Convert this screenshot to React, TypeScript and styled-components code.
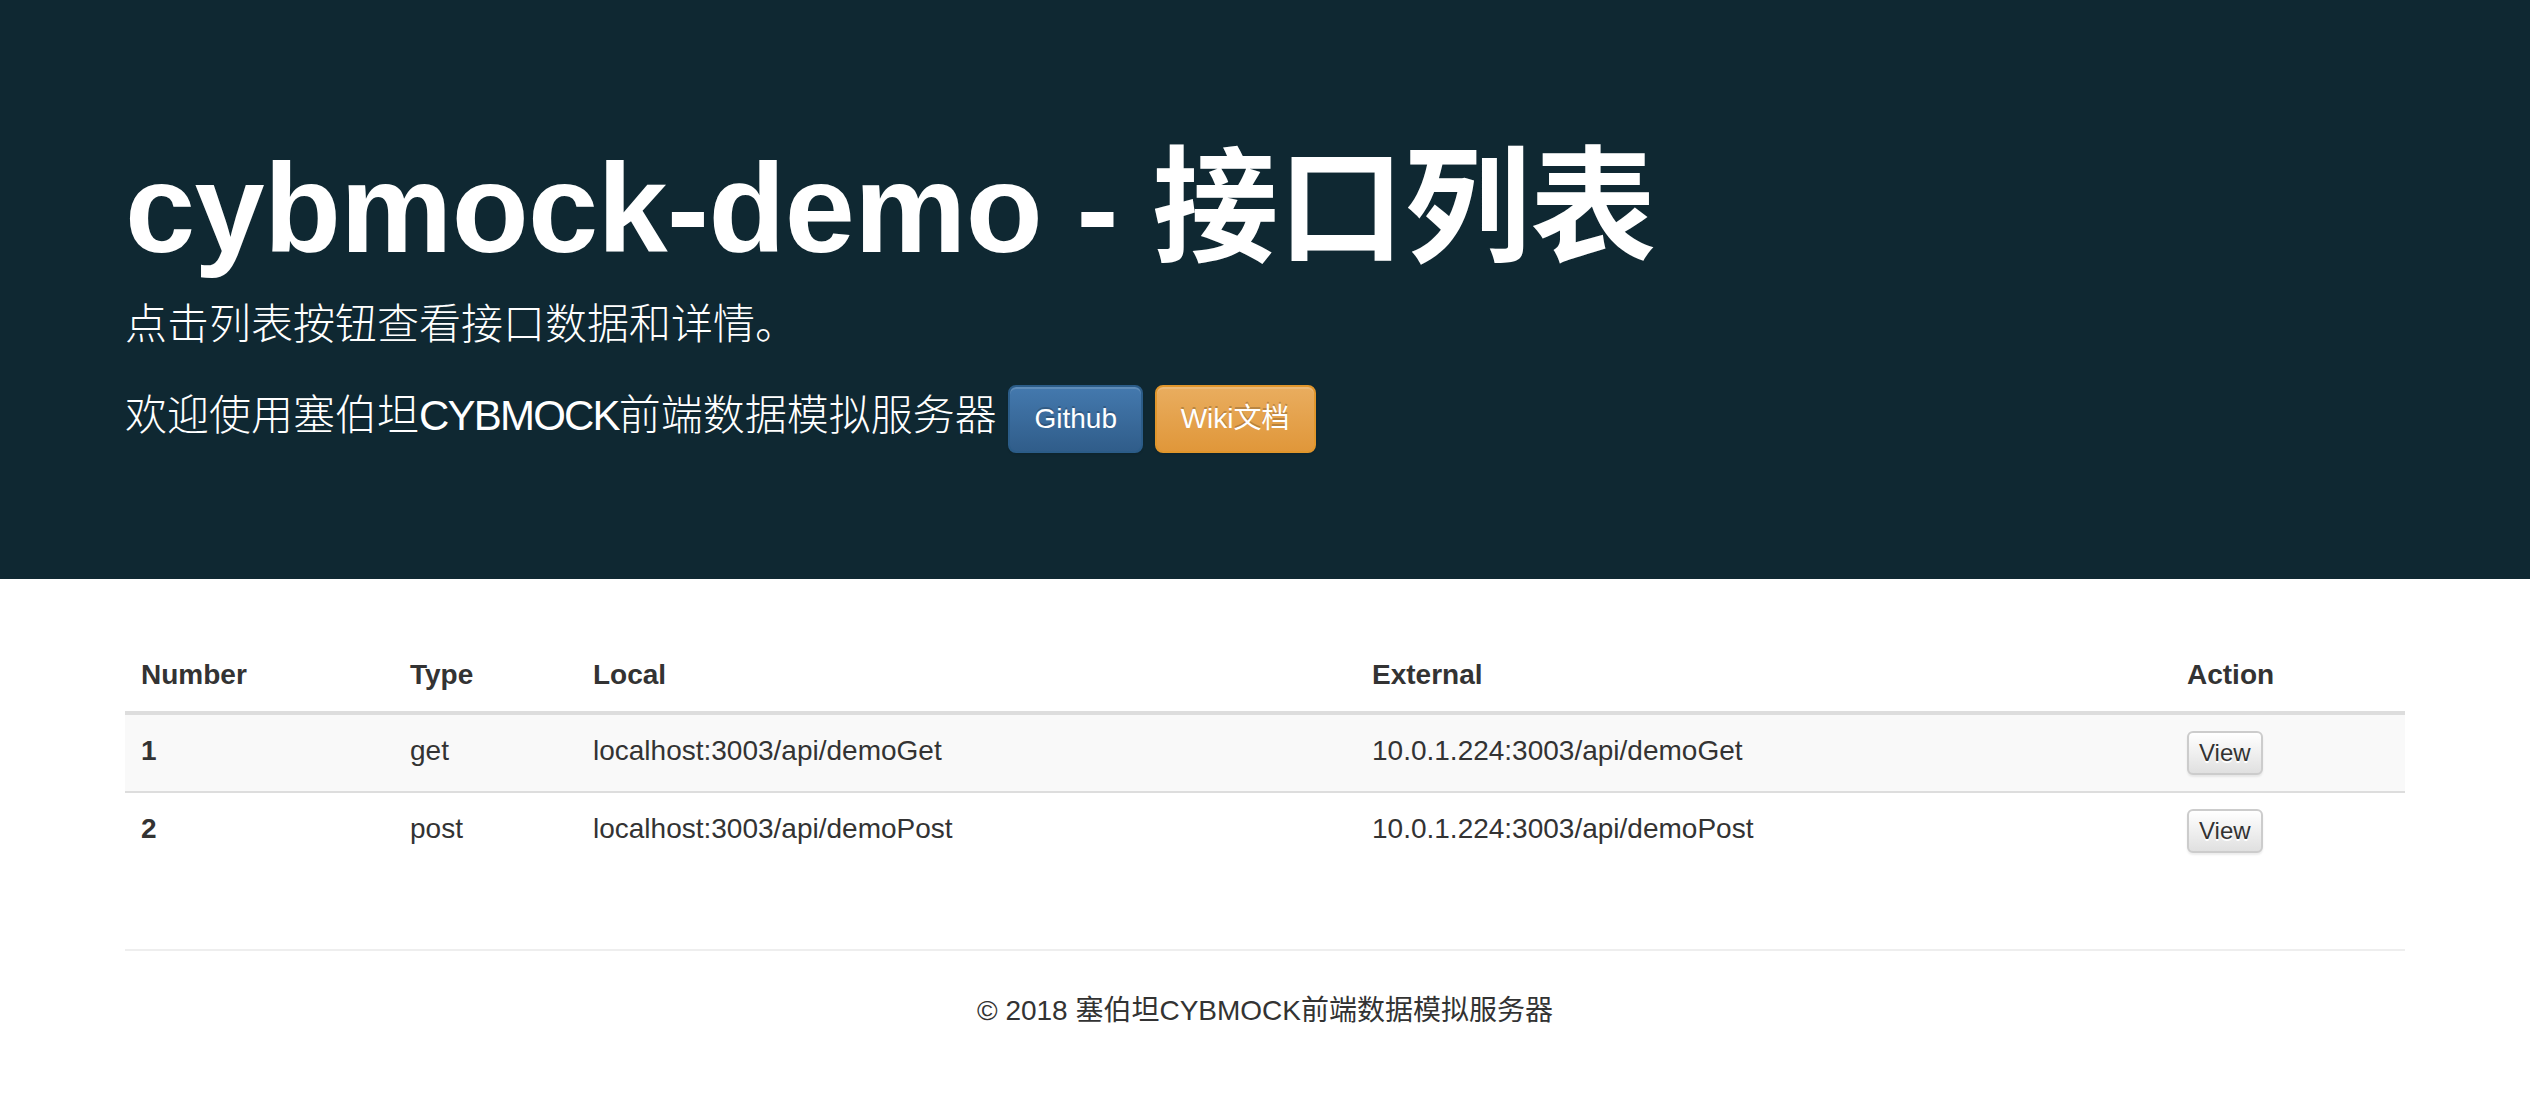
import React from 'react'
import styled, { createGlobalStyle } from 'styled-components'

const GlobalStyle = createGlobalStyle`
	html, body {
		margin: 0;
		padding: 0;
		background: #fff;
	}
	body {
		font-family: "Liberation Sans", "Noto Sans CJK SC", sans-serif;
		font-size: 28px;
		line-height: 1.42857;
		color: #333;
	}
	* {
		box-sizing: border-box;
	}
`

const Jumbotron = styled.header`
	background-color: #0f2832;
	color: #fff;
	padding: 96px 0;
	margin-bottom: 60px;
`

const Container = styled.div`
	width: 2340px;
	margin: 0 auto;
	padding: 0 30px;
`

const Title = styled.h1`
	font-size: 126px;
	font-weight: 700;
	line-height: 1.1;
	margin: 44px 0 16px;
	color: #fff;
`

const TitleLatin = styled.span`
	letter-spacing: -0.6px;
`

const Lead = styled.p`
	font-size: 42px;
	font-weight: 200;
	line-height: 60px;
	margin: 0 0 30px;
`

const Narrow = styled.span`
	letter-spacing: -1.8px;
`

const Btn = styled.a<{ $variant: 'primary' | 'warning' }>`
	display: inline-block;
	vertical-align: middle;
	padding: 12px 24px;
	font-size: 28px;
	font-weight: 400;
	line-height: 40px;
	color: #fff;
	text-decoration: none;
	border-radius: 8px;
	border: 2px solid ${p => (p.$variant === 'primary' ? '#2b5c88' : '#e0962c')};
	background-image: ${p =>
		p.$variant === 'primary'
			? 'linear-gradient(to bottom, #4479ae 0, #305d8a 100%)'
			: 'linear-gradient(to bottom, #e9ad5f 0, #e0973a 100%)'};
	text-shadow: 0 -2px 0 rgba(0, 0, 0, 0.2);
	box-shadow: inset 0 2px 0 rgba(255, 255, 255, 0.15), 0 2px 2px rgba(0, 0, 0, 0.075);
	cursor: pointer;
`

const Table = styled.table`
	width: 100%;
	border-collapse: collapse;
	border-spacing: 0;
	margin-bottom: 40px;
`

const Th = styled.th<{ $width?: number }>`
	width: ${p => (p.$width ? `${p.$width}px` : 'auto')};
	text-align: left;
	vertical-align: bottom;
	padding: 16px;
	line-height: 40px;
	font-weight: 700;
	border-bottom: 4px solid #ddd;
`

const Row = styled.tr`
	&:nth-of-type(odd) {
		background-color: #f9f9f9;
	}
`

const Td = styled.td<{ $bold?: boolean }>`
	padding: 16px;
	line-height: 40px;
	vertical-align: top;
	border-top: 2px solid #ddd;
	font-weight: ${p => (p.$bold ? 700 : 400)};
`

const ViewButton = styled.button`
	display: inline-block;
	padding: 2px 10px;
	font-family: inherit;
	font-size: 24px;
	line-height: 36px;
	color: #333;
	border: 2px solid #ccc;
	border-radius: 6px;
	background-image: linear-gradient(to bottom, #fff 0, #e0e0e0 100%);
	text-shadow: 0 2px 0 #fff;
	box-shadow: inset 0 2px 0 rgba(255, 255, 255, 0.15), 0 2px 2px rgba(0, 0, 0, 0.075);
	cursor: pointer;
`

const Rule = styled.hr`
	margin: 80px 0 40px;
	border: 0;
	border-top: 2px solid #eee;
`

const Footer = styled.footer`
	text-align: center;
	line-height: 40px;
`

const apis = [
	{ id: 1, type: 'get', local: 'localhost:3003/api/demoGet', external: '10.0.1.224:3003/api/demoGet' },
	{ id: 2, type: 'post', local: 'localhost:3003/api/demoPost', external: '10.0.1.224:3003/api/demoPost' }
]

export default function App() {
	return (
		<>
			<GlobalStyle />
			{/* Banner */}
			<Jumbotron>
				<Container>
					<Title>
						<TitleLatin>cybmock-demo - </TitleLatin>接口列表
					</Title>
					<Lead>点击列表按钮查看接口数据和详情。</Lead>
					<Lead>
						欢迎使用塞伯坦<Narrow>CYBMOCK</Narrow>前端数据模拟服务器{' '}
						<Btn $variant="primary">Github</Btn>{' '}
						<Btn $variant="warning">Wiki文档</Btn>
					</Lead>
				</Container>
			</Jumbotron>

			{/* Api list */}
			<Container>
				<Table>
					<thead>
						<tr>
							<Th $width={269}>Number</Th>
							<Th $width={183}>Type</Th>
							<Th $width={779}>Local</Th>
							<Th $width={815}>External</Th>
							<Th>Action</Th>
						</tr>
					</thead>
					<tbody>
						{apis.map(api => (
							<Row key={api.id}>
								<Td $bold>{api.id}</Td>
								<Td>{api.type}</Td>
								<Td>{api.local}</Td>
								<Td>{api.external}</Td>
								<Td>
									<ViewButton>View</ViewButton>
								</Td>
							</Row>
						))}
					</tbody>
				</Table>
				<Rule />
				<Footer>© 2018 塞伯坦CYBMOCK前端数据模拟服务器</Footer>
			</Container>
		</>
	)
}
